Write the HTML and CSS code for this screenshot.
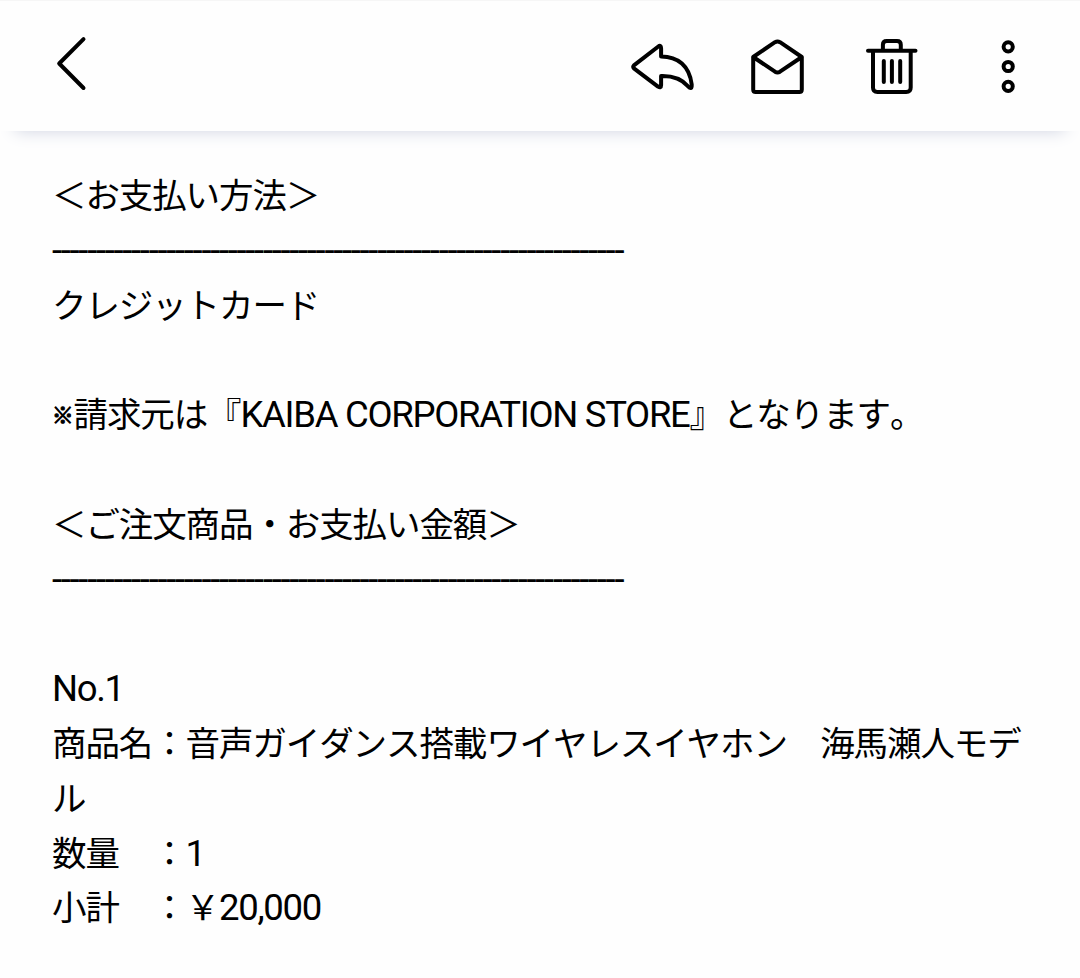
FILE: index.html
```html
<!DOCTYPE html>
<html lang="ja">
<head>
<meta charset="utf-8">
<title>ご注文内容</title>
<link rel="stylesheet" href="styles.css">
</head>
<body>
<header class="toolbar">
  <svg class="icon back" viewBox="0 0 40 64" width="40" height="64"><path d="M33.500 7.200 9.200 31.500l24.300 24.500"/></svg>
  <nav class="actions">
    <svg class="icon reply" viewBox="0 0 68 64" width="68" height="64"><path d="M5.900 33.300Q4.400 34.800 5.900 36.300L30 54.600Q33.100 56.400 33.100 53.300V44Q51 43.500 60 54.300Q64 58.500 63.700 52.500C61.500 34 50 24.500 33.100 24.500V16.500Q33.100 12.200 30 14.700Z"/></svg>
    <svg class="icon mail" viewBox="0 0 60 64" width="60" height="64"><path d="M6.200 25 28 10.200Q30.500 8.700 33 10.200L54.800 25V57.500Q54.800 60 52.300 60H8.700Q6.200 60 6.200 57.500ZM6.200 25 28 39.700Q30.500 41.200 33 39.700L54.800 25"/></svg>
    <svg class="icon trash" viewBox="0 0 60 64" width="60" height="64"><path d="M6 18.700H53.500M11 18.700V55.500Q11 60 15.500 60H44.200Q48.700 60 48.700 55.500V18.700M20.900 18.700V12.700Q20.900 9 24.700 9H35Q38.800 9 38.800 12.700V18.700M21.800 29V50M29.900 29V50M38.200 29V50"/></svg>
    <svg class="icon more" viewBox="0 0 24 64" width="24" height="64"><circle cx="12.200" cy="14.800" r="4.600"/><circle cx="12.200" cy="34.500" r="4.600"/><circle cx="12.200" cy="54.300" r="4.600"/></svg>
  </nav>
</header>
<main class="message">
  <p>＜お支払い方法＞</p>
  <p><span class="latin rule">-----------------------------------------------------------------</span></p>
  <p>クレジットカード</p>
  <p class="blank"></p>
  <p><span class="mark">※</span>請求元は『<span class="latin">KAIBA CORPORATION STORE</span>』となります。</p>
  <p class="blank"></p>
  <p>＜ご注文商品・お支払い金額＞</p>
  <p><span class="latin rule">-----------------------------------------------------------------</span></p>
  <p class="blank"></p>
  <p><span class="latin">No.1</span></p>
  <p>商品名：音声ガイダンス搭載ワイヤレスイヤホン　海馬瀬人モデル</p>
  <p>数量　：<span class="latin">1</span></p>
  <p>小計　：￥<span class="latin">20,000</span></p>
</main>
</body>
</html>
```
FILE: styles.css
```css
* {
  box-sizing: border-box;
}

body {
  margin: 0;
  height: 978px;
  overflow: hidden;
  background: #fefefe;
  color: #000;
}

.toolbar {
  display: flex;
  justify-content: space-between;
  height: 131px;
  padding: 31px 60px 0 50px;
  border-top: 1px solid #f6f6f6;
  background: #fefefe;
  box-shadow: 0 15px 16px -15px #d0d4e2;
}

.icon {
  display: block;
  fill: none;
  stroke: #000;
  stroke-width: 4;
  stroke-linecap: round;
  stroke-linejoin: round;
}

.actions {
  display: flex;
}

.mail {
  margin-left: 51px;
}

.trash {
  margin-left: 55px;
}

.more {
  margin-left: 74px;
}

.message {
  padding: 35px 52px 0;
  font-family: "Noto Sans CJK JP", sans-serif;
  font-size: 34.5px;
  font-kerning: none;
  letter-spacing: -1.1px;
}

.message p {
  min-height: 54.8px;
  margin: 0;
  line-height: 54.8px;
  word-break: break-all;
}

.latin {
  font-family: Roboto, sans-serif;
  font-size: 36.5px;
  font-kerning: normal;
  line-height: 1;
  letter-spacing: -1.3px;
}

.rule {
  white-space: nowrap;
}

.mark {
  display: inline-block;
  width: 21.5px;
  font-size: 21.5px;
  line-height: 1;
  vertical-align: 4px;
  -webkit-text-stroke: 1.1px #000;
}
```
